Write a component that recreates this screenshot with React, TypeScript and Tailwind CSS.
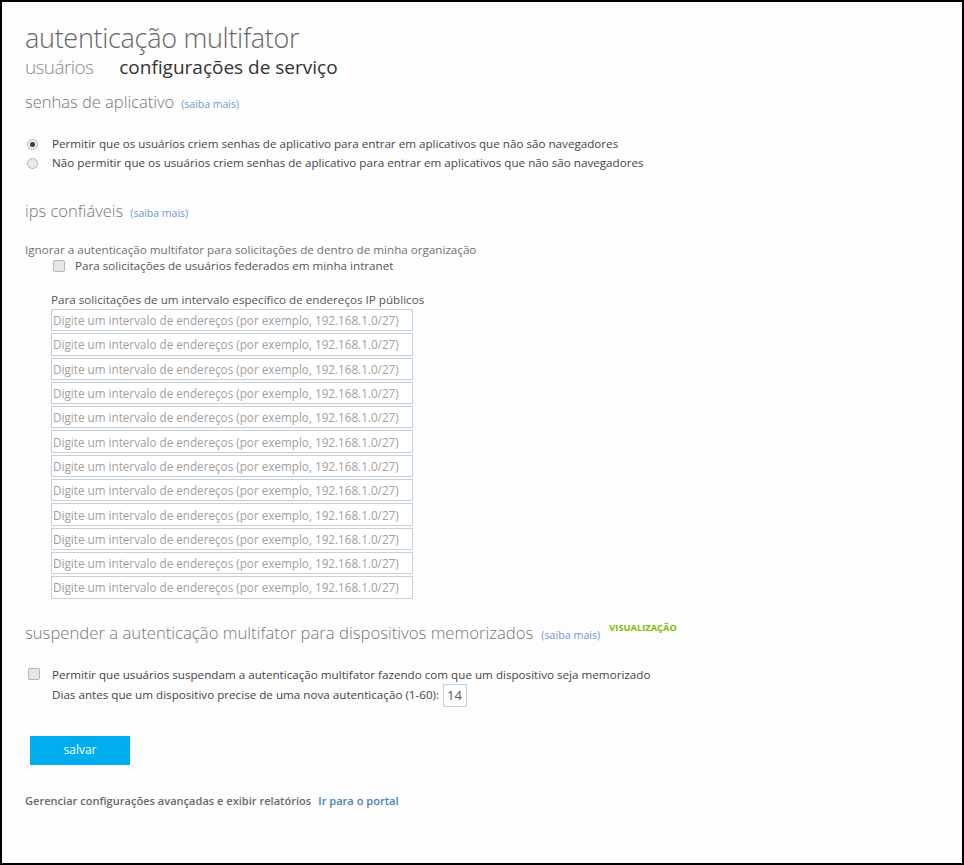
import React from "react";

const FONT = { fontFamily: '"Open Sans", "Noto Sans", sans-serif' };

const Radio = ({ checked }: { checked?: boolean }) => (
  <span className="w-[11px] h-[11px] rounded-full border border-[#b5b5b5] bg-[#ececec] flex items-center justify-center flex-shrink-0">
    {checked && <span className="w-[5px] h-[5px] rounded-full bg-[#3c3c3c]" />}
  </span>
);

const Check = () => (
  <span className="block w-[12px] h-[12px] rounded-[2px] border border-[#b5b5b5] bg-[#e6e6e6] flex-shrink-0" />
);

const SaibaMais = () => (
  <span className="text-[10.5px] text-[#6f9ad0] ml-[7px]">(saiba mais)</span>
);

export default function App() {
  const ranges = Array.from({ length: 12 });
  return (
    <div className="w-[964px] h-[865px] border-2 border-black bg-[#fdfdfd] pl-[23px] pt-[18px]" style={FONT}>
      {/* Header */}
      <h1 className="text-[27px] leading-[36px] font-light text-[#666] tracking-[-0.3px]">autenticação multifator</h1>
      <div className="flex items-baseline gap-[26px] text-[19px] leading-[24px] -mt-[1px]">
        <span className="font-light text-[#8a8a8a] tracking-[-0.6px]">usuários</span>
        <span className="text-[#333]">configurações de serviço</span>
      </div>

      {/* senhas de aplicativo */}
      <div className="mt-[12px] leading-[22px] flex items-baseline">
        <span className="text-[16.5px] font-light text-[#777]">senhas de aplicativo</span>
        <SaibaMais />
      </div>
      <div className="mt-[21px] flex flex-col gap-[3px] text-[11.65px] text-[#444] leading-[16px] pl-[2px]">
        <label className="flex items-center gap-[14px]">
          <Radio checked />
          <span>Permitir que os usuários criem senhas de aplicativo para entrar em aplicativos que não são navegadores</span>
        </label>
        <label className="flex items-center gap-[14px]">
          <Radio />
          <span>Não permitir que os usuários criem senhas de aplicativo para entrar em aplicativos que não são navegadores</span>
        </label>
      </div>

      {/* ips confiáveis */}
      <div className="mt-[29px] leading-[22px] flex items-baseline">
        <span className="text-[16.5px] font-light text-[#777]">ips confiáveis</span>
        <SaibaMais />
      </div>
      <p className="mt-[18px] text-[11.65px] leading-[16px] text-[#707070]">
        Ignorar a autenticação multifator para solicitações de dentro de minha organização
      </p>
      <label className="mt-0 ml-[28px] flex items-center gap-[10px] text-[11.65px] leading-[16px] text-[#555]">
        <Check />
        <span>Para solicitações de usuários federados em minha intranet</span>
      </label>
      <div className="ml-[26px] mt-[18px]">
        <p className="text-[11.65px] leading-[16px] text-[#555]">
          Para solicitações de um intervalo específico de endereços IP públicos
        </p>
        <div className="mt-[1px] flex flex-col gap-[2px]">
          {ranges.map((_, i) => (
            <input
              key={i}
              className="w-[362px] h-[22.3px] border border-[#c3d1dd] bg-white px-[1px] text-[11.7px] text-[#444] placeholder:text-[#a0a0a0] outline-none"
              placeholder="Digite um intervalo de endereços (por exemplo, 192.168.1.0/27)"
            />
          ))}
        </div>
      </div>

      {/* suspender */}
      <div className="mt-[23px] flex items-start">
        <span className="text-[16.7px] leading-[22px] font-light text-[#777]">
          suspender a autenticação multifator para dispositivos memorizados
        </span>
        <span className="text-[10.7px] leading-[22px] text-[#6f9ad0] ml-[8px] mt-[2px]">(saiba mais)</span>
        <span className="ml-[9px] text-[9.3px] leading-[12px] font-bold text-[#7fba00]">VISUALIZAÇÃO</span>
      </div>
      <div className="mt-[21px] flex gap-[12px] pl-[3px]">
        <span className="mt-[1px]"><Check /></span>
        <div className="text-[11.65px] text-[#444] leading-[16px]">
          <p>Permitir que usuários suspendam a autenticação multifator fazendo com que um dispositivo seja memorizado</p>
          <div className="flex items-center gap-[4px] mt-[1px]">
            <span>Dias antes que um dispositivo precise de uma nova autenticação (1-60):</span>
            <input
              defaultValue="14"
              className="w-[24px] h-[23px] border border-[#c3d1dd] bg-white px-[3px] text-[13px] text-[#555] outline-none"
            />
          </div>
        </div>
      </div>

      <button className="mt-[29px] ml-[5px] w-[100px] h-[29px] bg-[#00adef] text-white text-[12px] block">salvar</button>

      <p className="mt-[28px] text-[11.07px] leading-[16px] font-semibold text-[#6a6a6a]">
        Gerenciar configurações avançadas e exibir relatórios
        <a className="ml-[7px] text-[#4a80b8]">Ir para o portal</a>
      </p>
    </div>
  );
}
